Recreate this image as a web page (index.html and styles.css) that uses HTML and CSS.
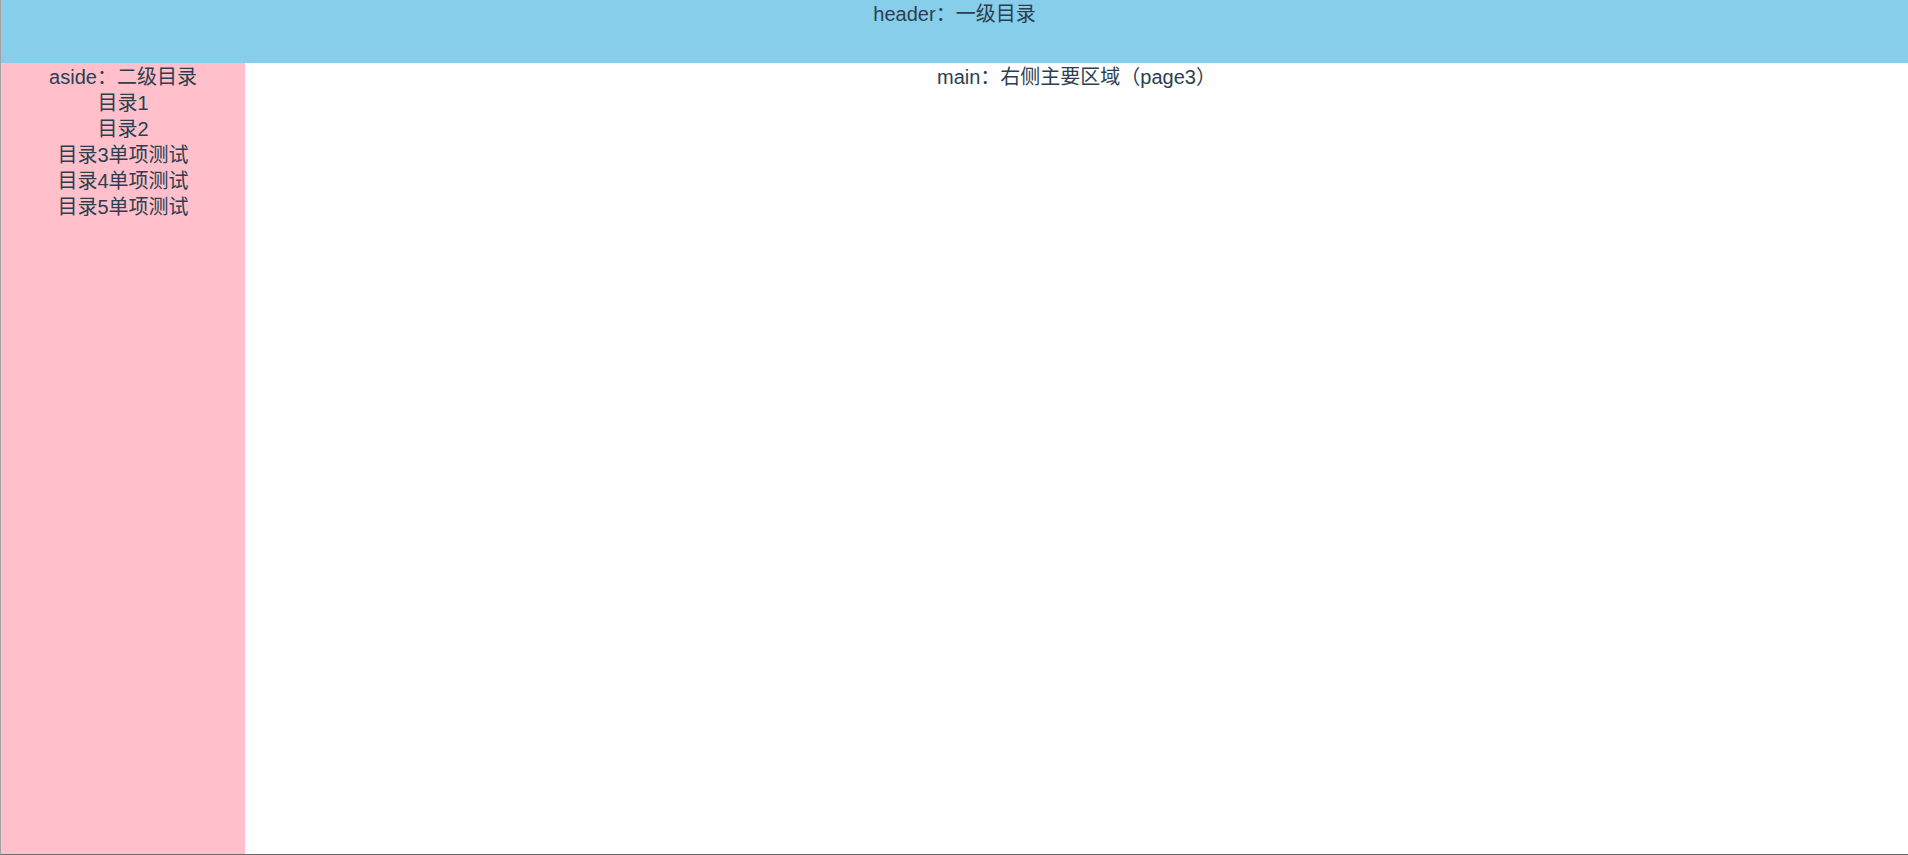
FILE: index.html
```html
<!DOCTYPE html>
<html lang="zh">
<head>
<meta charset="utf-8">
<title>layout</title>
<link rel="stylesheet" href="styles.css">
</head>
<body>
<div class="app">
  <header class="top">header：一级目录</header>
  <div class="body">
    <aside class="side">
      <div>aside：二级目录</div>
      <div>目录1</div>
      <div>目录2</div>
      <div>目录3单项测试</div>
      <div>目录4单项测试</div>
      <div>目录5单项测试</div>
    </aside>
    <main class="main">main：右侧主要区域（page3）</main>
  </div>
</div>
</body>
</html>
```
FILE: styles.css
```css
html, body {
  margin: 0;
  padding: 0;
  height: 100%;
}
body {
  font-family: "Liberation Sans", Arial, "Noto Sans CJK SC", sans-serif;
  font-size: 20px;
  line-height: 26px;
  color: #2c3e50;
  background: #fefefe;
}
.app {
  box-sizing: border-box;
  height: 855px;
  display: flex;
  flex-direction: column;
  border-left: 1px solid #a3a3a3;
  border-bottom: 1px solid #6a6a6a;
}
.top {
  box-sizing: border-box;
  height: 63px;
  padding-top: 1px;
  flex: none;
  background: #87ceeb;
  text-align: center;
}
.body {
  flex: 1;
  display: flex;
  min-height: 0;
}
.side {
  width: 244px;
  flex: none;
  padding-top: 1px;
  background: #ffc0cb;
  text-align: center;
}
.main {
  flex: 1;
  padding-top: 1px;
  background: #fefefe;
  text-align: center;
}
```
